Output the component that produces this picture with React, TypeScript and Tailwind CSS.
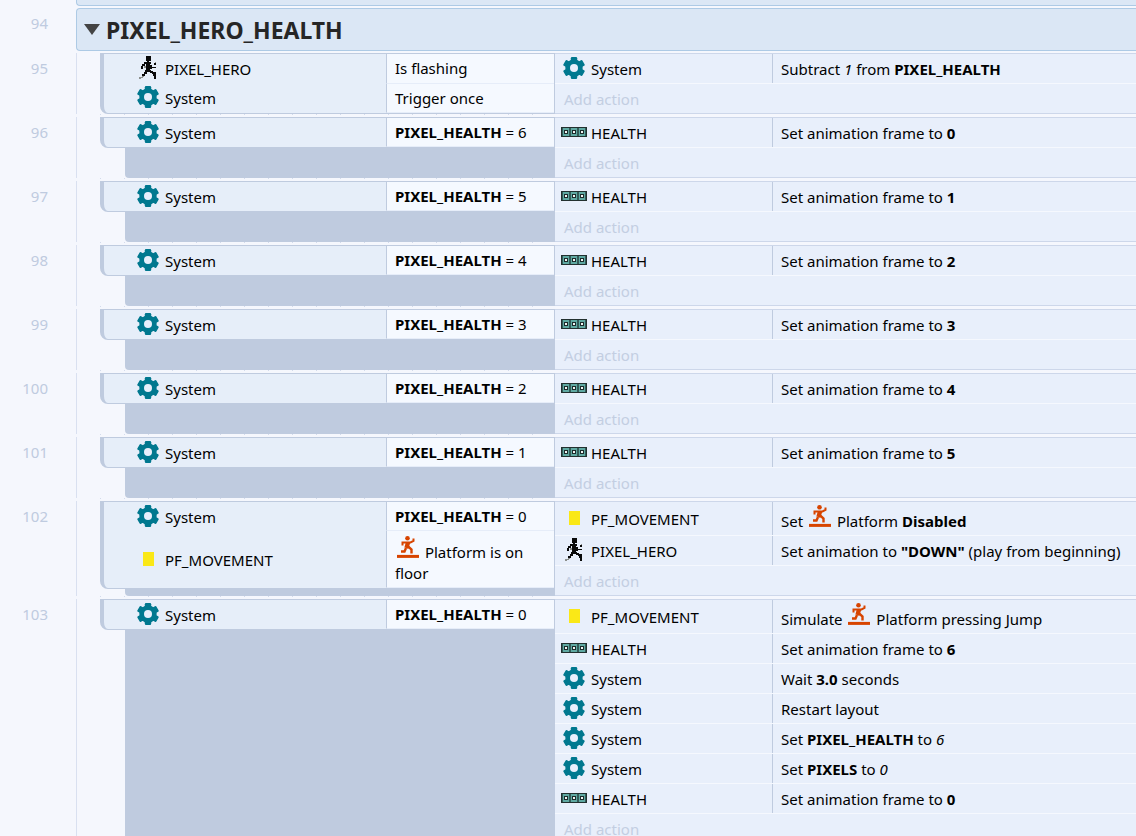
import type { ReactNode } from 'react'

type ObjectName = 'PIXEL_HERO' | 'System' | 'HEALTH' | 'PF_MOVEMENT'

type Row = {
  object: ObjectName
  text: ReactNode
  tall?: boolean
}

type EventBlock = {
  id: number
  conditions: Row[]
  actions: Row[]
}

function HeroIcon() {
  return (
    <svg width="18" height="23" viewBox="0 0 18 23" shapeRendering="crispEdges" aria-hidden="true">
      <path
        d="M7 0h5v5H7zM8 5h2v2H8zM5 6h7v2H5zM3 8h3v2H3zM2 10h2v3H2zM7 8h4v7H7zM11 9h2v2h4V7h-2v2h2v3h-4v1h-2zM6 14h6v2H6zM5 16h3v2H5zM3 18h3v2H3zM11 15h3v2h-3zM13 16h4v2h-4zM14 18h3v5h-2v-3h-1z"
        fill="#0a0a0a"
      />
      <path d="M16 6h1v1h-1zM5 10h2v2H5zM3 20h2v1H3zM0 21h4v1H0zM0 22h2v1H0z" fill="#8c8f8c" />
    </svg>
  )
}

function GearIcon() {
  return (
    <svg width="22" height="22" viewBox="0 0 22 22" aria-hidden="true">
      <g fill="#00788f">
        {[0, 60, 120].map((a) => (
          <rect key={a} x="7.8" y="0" width="6.4" height="22" rx="1.2" transform={`rotate(${a} 11 11)`} />
        ))}
        <circle cx="11" cy="11" r="8.7" />
      </g>
      <circle cx="11" cy="11" r="4" fill="#e8effb" />
    </svg>
  )
}

function HealthIcon() {
  return (
    <svg width="26" height="10" viewBox="0 0 26 10" shapeRendering="crispEdges" aria-hidden="true">
      <rect width="26" height="10" fill="#22302f" />
      {[1, 9, 17].map((x) => (
        <g key={x}>
          <rect x={x} y="1" width="8" height="8" fill="#335b58" />
          <rect x={x + 1} y="1" width="6" height="8" fill="#5fa9a2" />
          <rect x={x + 2} y="3" width="4" height="4" fill="#1c2a2a" />
          <rect x={x + 3} y="4" width="2" height="2" fill="#f2f6f4" />
        </g>
      ))}
    </svg>
  )
}

function PlatformIcon() {
  return (
    <svg
      className="inline-block align-baseline mx-[2px]"
      width="22"
      height="22"
      viewBox="0 0 22 22"
      fill="none"
      stroke="#d74400"
      strokeWidth="2"
      aria-hidden="true"
    >
      <circle cx="10.5" cy="2.3" r="2.3" fill="#d74400" stroke="none" />
      <path d="M5.5 9.5V6.5h8l3-1.5V2.5" />
      <path d="M11 6.5 9.5 12" strokeWidth="4.4" />
      <path d="M9 12l-1.5 3.5H4" strokeWidth="2.4" />
      <path d="M9.5 11.2h2.5l2.5 2.3V17.5" strokeWidth="2.4" />
      <path d="M0 20.4h22" strokeWidth="3" />
    </svg>
  )
}

function ObjectIcon({ name }: { name: ObjectName }) {
  if (name === 'PIXEL_HERO') return <HeroIcon />
  if (name === 'System') return <GearIcon />
  if (name === 'HEALTH') return <HealthIcon />
  return <span className="block w-[11px] h-[14px] bg-[#fae817]" />
}

function ObjectCell({ name }: { name: ObjectName }) {
  return (
    <div className="flex items-center gap-1">
      <span className="w-[26px] h-6 pb-[2px] shrink-0 flex items-center justify-center">
        <ObjectIcon name={name} />
      </span>
      <span>{name}</span>
    </div>
  )
}

function Condition({ row }: { row: Row }) {
  return (
    <div className={`flex grow ${row.tall ? 'min-h-[57px]' : 'min-h-[29px]'}`}>
      <div className="flex-1 flex items-center pl-[31px]">
        <ObjectCell name={row.object} />
      </div>
      <div className="w-[168px] flex items-center border-l border-l-[#bfcbdf] border-b border-b-[#e6edf9] bg-[#f5f9ff] pl-2 pt-px">
        <div className="leading-[21px]">{row.text}</div>
      </div>
    </div>
  )
}

function Action({ row }: { row: Row }) {
  return (
    <div className={`flex border-b border-[#f5f8fe] ${row.tall ? 'h-[34px]' : 'h-[30px]'}`}>
      <div className="w-[217px] shrink-0 flex items-center pl-[6px]">
        <ObjectCell name={row.object} />
      </div>
      <div className="flex-1 flex items-center border-l border-[#bfcbdf] pl-2 whitespace-nowrap">
        <div>{row.text}</div>
      </div>
    </div>
  )
}

function EventRow({ event }: { event: EventBlock }) {
  // conditions and actions (plus "Add action") are equally long, so no filler below
  const full = event.conditions.length > event.actions.length

  return (
    <section className="flex mb-[3px]">
      <div className="w-[76px] shrink-0 pr-7 pt-1 text-right text-[#bfcbe0]">{event.id}</div>
      <div className="w-6 shrink-0 border-l border-[#d9e0f0]" />
      <div className="relative w-[455px] shrink-0 flex flex-col">
        <div
          className={`flex flex-col rounded-bl-lg overflow-hidden border-l-4 border-y border-r border-[#bfcbdf] bg-[#e6eef9] ${full ? 'grow' : ''}`}
        >
          {event.conditions.map((row, i) => (
            <Condition key={i} row={row} />
          ))}
        </div>
        {!full && <div className="flex-1 ml-[25px] rounded-bl bg-[#bfcbdf]" />}
        <div className="absolute inset-x-0 -bottom-px h-px bg-[repeating-linear-gradient(90deg,#d3dbec_0_1px,transparent_1px_24px)]" />
      </div>
      <div className="flex-1 border-y border-[#cdd7ea] bg-[#e8effb]">
        {event.actions.map((row, i) => (
          <Action key={i} row={row} />
        ))}
        <button type="button" className="block h-[29px] pl-[9px] text-[#c3cee2]">
          Add action
        </button>
      </div>
    </section>
  )
}

function healthEvent(id: number, health: number, frame: number): EventBlock {
  return {
    id,
    conditions: [{ object: 'System', text: <><b>PIXEL_HEALTH</b> = {health}</> }],
    actions: [{ object: 'HEALTH', text: <>Set animation frame to <b>{frame}</b></> }],
  }
}

const events: EventBlock[] = [
  {
    id: 95,
    conditions: [
      { object: 'PIXEL_HERO', text: 'Is flashing' },
      { object: 'System', text: 'Trigger once' },
    ],
    actions: [{ object: 'System', text: <>Subtract <i>1</i> from <b>PIXEL_HEALTH</b></> }],
  },
  healthEvent(96, 6, 0),
  healthEvent(97, 5, 1),
  healthEvent(98, 4, 2),
  healthEvent(99, 3, 3),
  healthEvent(100, 2, 4),
  healthEvent(101, 1, 5),
  {
    id: 102,
    conditions: [
      { object: 'System', text: <><b>PIXEL_HEALTH</b> = 0</> },
      { object: 'PF_MOVEMENT', text: <><PlatformIcon /> Platform is on floor</>, tall: true },
    ],
    actions: [
      { object: 'PF_MOVEMENT', text: <>Set <PlatformIcon /> Platform <b>Disabled</b></>, tall: true },
      { object: 'PIXEL_HERO', text: <>Set animation to <b>"DOWN"</b> (play from beginning)</> },
    ],
  },
  {
    id: 103,
    conditions: [{ object: 'System', text: <><b>PIXEL_HEALTH</b> = 0</> }],
    actions: [
      { object: 'PF_MOVEMENT', text: <>Simulate <PlatformIcon /> Platform pressing Jump</>, tall: true },
      { object: 'HEALTH', text: <>Set animation frame to <b>6</b></> },
      { object: 'System', text: <>Wait <b>3.0</b> seconds</> },
      { object: 'System', text: 'Restart layout' },
      { object: 'System', text: <>Set <b>PIXEL_HEALTH</b> to <i>6</i></> },
      { object: 'System', text: <>Set <b>PIXELS</b> to <i>0</i></> },
      { object: 'HEALTH', text: <>Set animation frame to <b>0</b></> },
    ],
  },
]

export default function App() {
  return (
    <main className="h-screen overflow-hidden bg-[#f5f7fd] text-black text-[15px] leading-[22px] font-['Noto_Sans','Open_Sans',sans-serif]">
      <div className="ml-[76px] h-[6px] rounded-bl-sm border-l border-b border-[#adcae5] bg-[#dbe7f5]" />
      <header className="flex mt-[2px] mb-[2px]">
        <div className="w-[76px] shrink-0 pr-7 pt-1 text-right text-[#bfcbe0]">94</div>
        <div className="flex-1 h-[43px] flex items-center gap-[6px] pl-[7px] rounded-l-sm border border-r-0 border-[#adcae5] bg-[#dbe7f5]">
          <button type="button" aria-label="Collapse group">
            <svg width="16" height="11" viewBox="0 0 16 11" aria-hidden="true">
              <path d="M0 0h16L8 11z" fill="#444" />
            </svg>
          </button>
          <h1 className="text-[23px] font-bold text-[#262626]">PIXEL_HERO_HEALTH</h1>
        </div>
      </header>
      {events.map((event) => (
        <EventRow key={event.id} event={event} />
      ))}
    </main>
  )
}
